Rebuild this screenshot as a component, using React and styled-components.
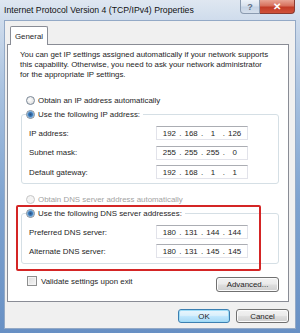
import React from 'react';
import styled, { createGlobalStyle } from 'styled-components';

const GlobalStyle = createGlobalStyle`
  html, body {
    margin: 0;
    padding: 0;
    background: #6d93c4;
  }
  body {
    font-family: "Liberation Sans", Arial, sans-serif;
    font-size: 7.9px;
    color: #1e1e1e;
  }
  * { box-sizing: border-box; }
`;

const Window = styled.div`
  width: 300px;
  height: 333px;
  display: flex;
  flex-direction: column;
  overflow: hidden;
  background: linear-gradient(to bottom, #dfe7f1 0, #cfdcec 20px, #a9c2e0 90px, #7ea3d0 200px, #6890c4 100%);
`;

const TitleBar = styled.div`
  height: 20px;
  display: flex;
  align-items: flex-start;
  padding-left: 4px;
`;

const Title = styled.span`
  margin-top: 5px;
  font-size: 8.7px;
  color: #111;
  white-space: nowrap;
`;

const CaptionButtons = styled.div`
  margin-left: auto;
  margin-right: 5px;
  display: flex;
`;

const CaptionButton = styled.div`
  height: 14px;
  width: ${(p) => (p.$close ? '35px' : '20px')};
  display: flex;
  align-items: center;
  justify-content: center;
  border: 1px solid ${(p) => (p.$close ? '#8a3a30' : '#8b9bb0')};
  border-top: none;
  border-left: ${(p) => (p.$close ? 'none' : undefined)};
  border-radius: ${(p) => (p.$close ? '0 0 4px 0' : '0 0 0 4px')};
  background: ${(p) =>
    p.$close
      ? 'linear-gradient(to bottom, #e8a493 0%, #d7705c 45%, #c23b26 55%, #d0523a 100%)'
      : 'linear-gradient(to bottom, #eef3f9 0%, #d8e2ee 45%, #c4d2e4 55%, #d6e0ec 100%)'};
  color: ${(p) => (p.$close ? '#fff' : '#5d6e85')};
  font-size: ${(p) => (p.$close ? '10px' : '9px')};
  font-weight: bold;
`;

const Client = styled.div`
  flex: 1;
  margin: 0 4px 4px 4px;
  background: #f0f0f0;
  border: 1px solid #93a9c6;
  padding: 5px 6px 0 2px;
  display: flex;
  flex-direction: column;
`;

const TabRow = styled.div`
  display: flex;
  padding-left: 3px;
  margin-bottom: -1px;
  position: relative;
  z-index: 1;
`;

const Tab = styled.div`
  height: 19px;
  width: 38px;
  padding-top: 5px;
  text-align: center;
  background: #fff;
  border: 1px solid #898c95;
  border-bottom: none;
  border-radius: 2px 2px 0 0;
  color: #1e1e1e;
`;

const Panel = styled.div`
  position: relative;
  height: 258px;
  background: #fff;
  border: 1px solid #898c95;
  padding: 5px 9px 0 12px;
  display: flex;
  flex-direction: column;
`;

const Paragraph = styled.p`
  margin: 0;
  line-height: 10px;
  white-space: nowrap;
`;

const OptionRow = styled.div`
  display: flex;
  align-items: center;
  gap: 3px;
  height: 12px;
  margin-top: ${(p) => p.$mt || 0}px;
  margin-left: ${(p) => (p.$inset ? 6 : 0)}px;
  color: ${(p) => (p.$disabled ? '#a3a3a3' : '#1e1e1e')};
  white-space: nowrap;
`;

const Radio = styled.span`
  width: 9px;
  height: 9px;
  border-radius: 50%;
  border: 1px solid ${(p) => (p.$disabled ? '#c6c6c6' : '#7b8897')};
  background: ${(p) =>
    p.$checked
      ? 'radial-gradient(circle, #2a4f7e 0, #3d79b8 2px, #8cc0ea 3.2px, #f4f4f4 3.6px)'
      : p.$disabled
      ? '#f4f4f4'
      : 'radial-gradient(circle at 40% 40%, #ffffff 0, #e6e6e6 60%, #d2d2d2 100%)'};
  flex-shrink: 0;
`;

const Group = styled.fieldset`
  margin: 2px 0 0 1px;
  padding: 0 4px ${(p) => p.$pb}px 4px;
  border: 1px solid #d5dfe5;
  border-radius: 3px;
  min-width: 0;
`;

const Legend = styled.legend`
  padding: 0 3px 0 0;
  background: #fff;
`;

const Rows = styled.div`
  display: flex;
  flex-direction: column;
  gap: ${(p) => p.$gap}px;
  padding-top: 6px;
  padding-left: 3px;
`;

const FieldRow = styled.div`
  display: flex;
  align-items: center;
  height: 14px;
`;

const FieldLabel = styled.span`
  width: 127px;
  white-space: nowrap;
`;

const IpBox = styled.div`
  width: 92px;
  height: 14px;
  display: grid;
  grid-template-columns: 1fr auto 1fr auto 1fr auto 1fr;
  align-items: center;
  padding: 0 3px;
  border: 1px solid #e2e3ea;
  border-top-color: #abadb3;
  background: #fff;
  color: #1e1e1e;
`;

const Octet = styled.span`
  text-align: center;
`;

const Dot = styled.span`
  width: 3px;
  text-align: center;
`;

const BottomRow = styled.div`
  display: flex;
  align-items: flex-start;
  margin-top: 11px;
`;

const CheckRow = styled.label`
  display: flex;
  align-items: center;
  gap: 4px;
  height: 12px;
  margin-left: 7px;
`;

const Checkbox = styled.span`
  width: 10px;
  height: 10px;
  border: 1px solid #8e8f8f;
  background: linear-gradient(135deg, #dcdcdc 0%, #f6f6f6 100%);
  box-shadow: inset 0 0 0 1px #f4f4f4;
`;

const Button = styled.div`
  width: ${(p) => p.$w}px;
  height: ${(p) => p.$h || 14}px;
  display: flex;
  align-items: center;
  justify-content: center;
  border-radius: 3px;
  border: 1px solid ${(p) => (p.$default ? '#3c7fb1' : '#707070')};
  background: ${(p) =>
    p.$default
      ? 'linear-gradient(to bottom, #eaf6fd 0%, #d9f0fc 45%, #bee6fd 55%, #a7d9f5 100%)'
      : 'linear-gradient(to bottom, #f2f2f2 0%, #ebebeb 45%, #dddddd 55%, #cfcfcf 100%)'};
  box-shadow: inset 0 0 0 1px ${(p) => (p.$default ? '#9edcf7' : '#fbfbfb')};
  color: #1e1e1e;
  white-space: nowrap;
`;

const AdvancedButton = styled(Button)`
  margin-left: auto;
  margin-top: 2px;
`;

const DialogButtons = styled.div`
  display: flex;
  justify-content: flex-end;
  gap: 6px;
  margin-top: 7px;
`;

const Highlight = styled.div`
  position: absolute;
  left: 8px;
  top: 160px;
  width: 245px;
  height: 66px;
  border: 2px solid #d42525;
  border-radius: 2px;
  pointer-events: none;
`;

function IpField({ value }) {
  const parts = value.split('.');
  return (
    <IpBox>
      {parts.map((part, i) => (
        <React.Fragment key={i}>
          <Octet>{part}</Octet>
          {i < 3 && <Dot>.</Dot>}
        </React.Fragment>
      ))}
    </IpBox>
  );
}

function Field({ label, value }) {
  return (
    <FieldRow>
      <FieldLabel>{label}</FieldLabel>
      <IpField value={value} />
    </FieldRow>
  );
}

export default function App() {
  return (
    <>
      <GlobalStyle />
      <Window>
        <TitleBar>
          <Title>Internet Protocol Version 4 (TCP/IPv4) Properties</Title>
          <CaptionButtons>
            <CaptionButton>?</CaptionButton>
            <CaptionButton $close>✕</CaptionButton>
          </CaptionButtons>
        </TitleBar>
        <Client>
          <TabRow>
            <Tab>General</Tab>
          </TabRow>
          <Panel>
            <Paragraph>
              You can get IP settings assigned automatically if your network supports
              <br />
              this capability. Otherwise, you need to ask your network administrator
              <br />
              for the appropriate IP settings.
            </Paragraph>

            <OptionRow $inset $mt={14}>
              <Radio />
              Obtain an IP address automatically
            </OptionRow>
            <Group $pb={4}>
              <Legend>
                <OptionRow>
                  <Radio $checked />
                  Use the following IP address:
                </OptionRow>
              </Legend>
              <Rows $gap={5.5}>
                <Field label="IP address:" value="192.168.1.126" />
                <Field label="Subnet mask:" value="255.255.255.0" />
                <Field label="Default gateway:" value="192.168.1.1" />
              </Rows>
            </Group>

            <OptionRow $inset $disabled $mt={9}>
              <Radio $disabled />
              Obtain DNS server address automatically
            </OptionRow>
            <Group $pb={5}>
              <Legend>
                <OptionRow>
                  <Radio $checked />
                  Use the following DNS server addresses:
                </OptionRow>
              </Legend>
              <Rows $gap={5}>
                <Field label="Preferred DNS server:" value="180.131.144.144" />
                <Field label="Alternate DNS server:" value="180.131.145.145" />
              </Rows>
            </Group>

            <BottomRow>
              <CheckRow>
                <Checkbox />
                Validate settings upon exit
              </CheckRow>
              <AdvancedButton $w={63} $h={15}>Advanced...</AdvancedButton>
            </BottomRow>

            <Highlight />
          </Panel>
          <DialogButtons>
            <Button $default $w={52}>OK</Button>
            <Button $w={53}>Cancel</Button>
          </DialogButtons>
        </Client>
      </Window>
    </>
  );
}
